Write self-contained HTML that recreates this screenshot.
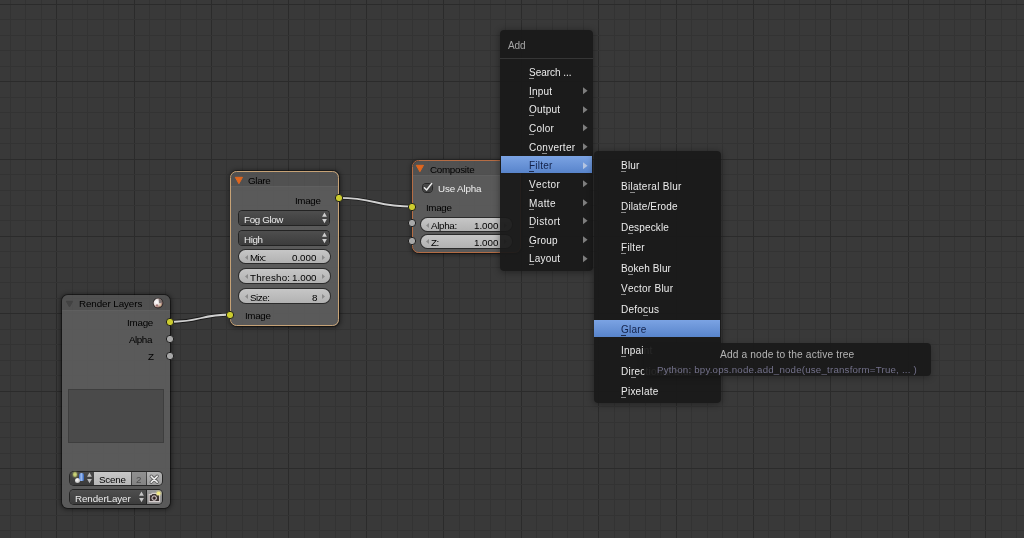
<!DOCTYPE html><html><head><meta charset="utf-8"><style>html,body{margin:0;padding:0;width:1024px;height:538px;overflow:hidden;background:#393939;font-family:"Liberation Sans",sans-serif;}.abs{position:absolute;}.t{position:absolute;white-space:pre;line-height:1;will-change:transform;}.sock{border-radius:50%;box-shadow:0 0 0 0.9px #1a1a1a;}.u{position:relative;}.u::after{content:"";position:absolute;left:0px;width:5px;top:10.7px;height:1px;background:var(--uc);}</style></head><body><div id="root" style="position:absolute;left:0;top:0;width:1024px;height:538px;overflow:hidden;filter:blur(0.28px)"><svg class="abs" width="1024" height="538" style="left:0;top:0;filter:blur(0.45px)" shape-rendering="crispEdges"><rect x="10" y="0" width="1" height="538" fill="#333333"/><rect x="25" y="0" width="1" height="538" fill="#333333"/><rect x="41" y="0" width="1" height="538" fill="#333333"/><rect x="56" y="0" width="1" height="538" fill="#2b2b2b"/><rect x="72" y="0" width="1" height="538" fill="#333333"/><rect x="87" y="0" width="1" height="538" fill="#333333"/><rect x="103" y="0" width="1" height="538" fill="#333333"/><rect x="118" y="0" width="1" height="538" fill="#333333"/><rect x="134" y="0" width="1" height="538" fill="#2b2b2b"/><rect x="149" y="0" width="1" height="538" fill="#333333"/><rect x="165" y="0" width="1" height="538" fill="#333333"/><rect x="180" y="0" width="1" height="538" fill="#333333"/><rect x="196" y="0" width="1" height="538" fill="#333333"/><rect x="211" y="0" width="1" height="538" fill="#2b2b2b"/><rect x="226" y="0" width="1" height="538" fill="#333333"/><rect x="242" y="0" width="1" height="538" fill="#333333"/><rect x="257" y="0" width="1" height="538" fill="#333333"/><rect x="273" y="0" width="1" height="538" fill="#333333"/><rect x="288" y="0" width="1" height="538" fill="#2b2b2b"/><rect x="304" y="0" width="1" height="538" fill="#333333"/><rect x="319" y="0" width="1" height="538" fill="#333333"/><rect x="335" y="0" width="1" height="538" fill="#333333"/><rect x="350" y="0" width="1" height="538" fill="#333333"/><rect x="366" y="0" width="1" height="538" fill="#2b2b2b"/><rect x="381" y="0" width="1" height="538" fill="#333333"/><rect x="397" y="0" width="1" height="538" fill="#333333"/><rect x="412" y="0" width="1" height="538" fill="#333333"/><rect x="428" y="0" width="1" height="538" fill="#333333"/><rect x="443" y="0" width="1" height="538" fill="#2b2b2b"/><rect x="459" y="0" width="1" height="538" fill="#333333"/><rect x="474" y="0" width="1" height="538" fill="#333333"/><rect x="490" y="0" width="1" height="538" fill="#333333"/><rect x="505" y="0" width="1" height="538" fill="#333333"/><rect x="521" y="0" width="1" height="538" fill="#2b2b2b"/><rect x="536" y="0" width="1" height="538" fill="#333333"/><rect x="552" y="0" width="1" height="538" fill="#333333"/><rect x="567" y="0" width="1" height="538" fill="#333333"/><rect x="583" y="0" width="1" height="538" fill="#333333"/><rect x="598" y="0" width="1" height="538" fill="#2b2b2b"/><rect x="614" y="0" width="1" height="538" fill="#333333"/><rect x="629" y="0" width="1" height="538" fill="#333333"/><rect x="645" y="0" width="1" height="538" fill="#333333"/><rect x="660" y="0" width="1" height="538" fill="#333333"/><rect x="676" y="0" width="1" height="538" fill="#2b2b2b"/><rect x="691" y="0" width="1" height="538" fill="#333333"/><rect x="707" y="0" width="1" height="538" fill="#333333"/><rect x="722" y="0" width="1" height="538" fill="#333333"/><rect x="737" y="0" width="1" height="538" fill="#333333"/><rect x="753" y="0" width="1" height="538" fill="#2b2b2b"/><rect x="768" y="0" width="1" height="538" fill="#333333"/><rect x="784" y="0" width="1" height="538" fill="#333333"/><rect x="799" y="0" width="1" height="538" fill="#333333"/><rect x="815" y="0" width="1" height="538" fill="#333333"/><rect x="830" y="0" width="1" height="538" fill="#2b2b2b"/><rect x="846" y="0" width="1" height="538" fill="#333333"/><rect x="861" y="0" width="1" height="538" fill="#333333"/><rect x="877" y="0" width="1" height="538" fill="#333333"/><rect x="892" y="0" width="1" height="538" fill="#333333"/><rect x="908" y="0" width="1" height="538" fill="#2b2b2b"/><rect x="923" y="0" width="1" height="538" fill="#333333"/><rect x="939" y="0" width="1" height="538" fill="#333333"/><rect x="954" y="0" width="1" height="538" fill="#333333"/><rect x="970" y="0" width="1" height="538" fill="#333333"/><rect x="985" y="0" width="1" height="538" fill="#2b2b2b"/><rect x="1001" y="0" width="1" height="538" fill="#333333"/><rect x="1016" y="0" width="1" height="538" fill="#333333"/><rect x="0" y="4" width="1024" height="1" fill="#2b2b2b"/><rect x="0" y="19" width="1024" height="1" fill="#333333"/><rect x="0" y="35" width="1024" height="1" fill="#333333"/><rect x="0" y="50" width="1024" height="1" fill="#333333"/><rect x="0" y="66" width="1024" height="1" fill="#333333"/><rect x="0" y="81" width="1024" height="1" fill="#2b2b2b"/><rect x="0" y="97" width="1024" height="1" fill="#333333"/><rect x="0" y="112" width="1024" height="1" fill="#333333"/><rect x="0" y="128" width="1024" height="1" fill="#333333"/><rect x="0" y="143" width="1024" height="1" fill="#333333"/><rect x="0" y="159" width="1024" height="1" fill="#2b2b2b"/><rect x="0" y="174" width="1024" height="1" fill="#333333"/><rect x="0" y="190" width="1024" height="1" fill="#333333"/><rect x="0" y="205" width="1024" height="1" fill="#333333"/><rect x="0" y="220" width="1024" height="1" fill="#333333"/><rect x="0" y="236" width="1024" height="1" fill="#2b2b2b"/><rect x="0" y="251" width="1024" height="1" fill="#333333"/><rect x="0" y="267" width="1024" height="1" fill="#333333"/><rect x="0" y="282" width="1024" height="1" fill="#333333"/><rect x="0" y="298" width="1024" height="1" fill="#333333"/><rect x="0" y="313" width="1024" height="1" fill="#2b2b2b"/><rect x="0" y="329" width="1024" height="1" fill="#333333"/><rect x="0" y="344" width="1024" height="1" fill="#333333"/><rect x="0" y="360" width="1024" height="1" fill="#333333"/><rect x="0" y="375" width="1024" height="1" fill="#333333"/><rect x="0" y="391" width="1024" height="1" fill="#2b2b2b"/><rect x="0" y="406" width="1024" height="1" fill="#333333"/><rect x="0" y="422" width="1024" height="1" fill="#333333"/><rect x="0" y="437" width="1024" height="1" fill="#333333"/><rect x="0" y="453" width="1024" height="1" fill="#333333"/><rect x="0" y="468" width="1024" height="1" fill="#2b2b2b"/><rect x="0" y="484" width="1024" height="1" fill="#333333"/><rect x="0" y="499" width="1024" height="1" fill="#333333"/><rect x="0" y="515" width="1024" height="1" fill="#333333"/><rect x="0" y="530" width="1024" height="1" fill="#333333"/></svg><div class="abs" style="left:62.00px;top:295.00px;width:108.00px;height:213.40px;border-radius:6px;box-shadow:0 0 0 1px rgba(0,0,0,0.42),0 0.5px 4px 1.5px rgba(0,0,0,0.42);background:rgba(93,93,93,0.93);"></div><div class="abs" style="left:62.00px;top:295.00px;width:108.00px;height:15.00px;border-radius:6px 6px 0 0;background:rgba(0,0,0,0.10);box-shadow:0 1px 0 rgba(255,255,255,0.03);"></div><svg class="abs" style="left:64.8px;top:299.6px" width="9.0" height="8.2"><polygon points="1.3,1.3 7.7,1.3 4.5,6.9" fill="#424242" stroke="#424242" stroke-width="1" stroke-linejoin="round"/></svg><div class="t" style="left:78.60px;top:298.90px;font-size:9.8px;color:#000;letter-spacing:-0.082px;">Render Layers</div><svg class="abs" style="left:152px;top:297.3px" width="12" height="12"><defs><radialGradient id="sph" cx="0.35" cy="0.38" r="0.7"><stop offset="0" stop-color="#ffffff"/><stop offset="0.45" stop-color="#e8e0e0"/><stop offset="0.8" stop-color="#b08a80"/><stop offset="1" stop-color="#6a4a44"/></radialGradient></defs><circle cx="6.1" cy="6.1" r="5.3" fill="#2e2a2a"/><circle cx="6.1" cy="6.1" r="4.5" fill="url(#sph)"/><path d="M6.6,1.8 A4.4,4.4 0 0 1 10.4,5.6 L7,6.2 Z" fill="#6a6262" opacity="0.8"/><circle cx="5" cy="8.3" r="1.1" fill="#8a5050" opacity="0.7"/><circle cx="8.2" cy="8" r="1.3" fill="#e8d8a8" opacity="0.6"/></svg><div class="t" style="right:871.00px;top:318.40px;font-size:9.8px;color:#000;letter-spacing:-0.227px;">Image</div><div class="t" style="right:871.70px;top:335.10px;font-size:9.8px;color:#000;letter-spacing:-0.433px;">Alpha</div><div class="t" style="right:870.50px;top:352.30px;font-size:9.8px;color:#000;letter-spacing:0.000px;">Z</div><div class="abs" style="left:69.00px;top:389.50px;width:94.00px;height:52.00px;background:#4a4a4a;box-shadow:0 0 0 1px #3e3e3e;"></div><div class="abs" style="left:70.00px;top:471.70px;width:92.00px;height:13.30px;border-radius:4px;box-shadow:0 0 0 1px #262626;background:linear-gradient(#4a4a4a,#3a3a3a);"></div><div class="abs" style="left:93.70px;top:471.70px;width:37.60px;height:13.30px;background:linear-gradient(#c8c8c8,#b6b6b6);"></div><div class="abs" style="left:131.90px;top:471.70px;width:14.40px;height:13.30px;background:linear-gradient(#909090,#848484);"></div><div class="abs" style="left:146.70px;top:471.70px;width:15.30px;height:13.30px;border-radius:0 4px 4px 0;background:linear-gradient(#b4b4b4,#9c9c9c);"></div><div class="t" style="left:99.30px;top:475.20px;font-size:9.8px;color:#000;letter-spacing:-0.216px;">Scene</div><div class="t" style="left:135.60px;top:475.20px;font-size:9.8px;color:#4e4e4e;letter-spacing:0.000px;">2</div><svg class="abs" style="left:147.8px;top:472.6px" width="12" height="12"><path d="M3.2,3.2 L9.2,9.2 M9.2,3.2 L3.2,9.2" stroke="#5a5a5a" stroke-width="3.2" stroke-linecap="round"/><path d="M3.2,3.2 L9.2,9.2 M9.2,3.2 L3.2,9.2" stroke="#f0f0f0" stroke-width="1.6" stroke-linecap="round"/></svg><div class="abs" style="left:72.8px;top:472.4px;width:4.4px;height:4.4px;border-radius:50%;background:radial-gradient(#d8e080,#98a058);box-shadow:0 0 1.5px 0.5px rgba(200,210,110,0.5)"></div><div class="abs" style="left:79.4px;top:473.2px;width:4.6px;height:7.4px;border-radius:2.2px 2.2px 1.5px 1.5px;background:linear-gradient(90deg,#3a6ac8,#a0c0f4 45%,#3060b8)"></div><div class="abs" style="left:74.6px;top:477.8px;width:5.6px;height:5.6px;border-radius:50%;background:radial-gradient(circle at 40% 35%,#fff,#c0c0c0 70%,#888)"></div><svg class="abs" style="left:87.40px;top:472.30px" width="5" height="12"><polygon points="2.5,0.6 4.9,4.7 0.1,4.7" fill="#bdbdbd"/><polygon points="0.1,7.1 4.9,7.1 2.5,11.2" fill="#bdbdbd"/></svg><div class="abs" style="left:70.00px;top:489.90px;width:76.30px;height:14.10px;border-radius:4px 0 0 4px;background:linear-gradient(#4e4e4e,#3c3c3c);box-shadow:0 0 0 1px #232323;"></div><div class="t" style="left:75.20px;top:493.50px;font-size:9.8px;color:#ececec;letter-spacing:-0.095px;">RenderLayer</div><svg class="abs" style="left:139.20px;top:490.90px" width="5" height="12"><polygon points="2.5,0.6 4.9,4.7 0.1,4.7" fill="#c4c4c4"/><polygon points="0.1,7.1 4.9,7.1 2.5,11.2" fill="#c4c4c4"/></svg><div class="abs" style="left:146.70px;top:489.90px;width:15.30px;height:14.10px;border-radius:0 4px 4px 0;background:linear-gradient(#9a9a9a,#888888);box-shadow:0 0 0 1px #232323;"></div><svg class="abs" style="left:147px;top:490px" width="15" height="14"><path d="M2.2,4.6 L4.2,4.6 L5.2,3.4 L9.2,3.4 L10.2,4.6 L12.6,4.6 L12.6,11.6 L2.2,11.6 Z" fill="#3a3030" stroke="#d4cccc" stroke-width="1.1"/><circle cx="7.2" cy="8.1" r="2.3" fill="#5a4848" stroke="#e4dcdc" stroke-width="0.9"/><circle cx="7.2" cy="8.1" r="0.9" fill="#201818"/><circle cx="11.6" cy="3.2" r="1.8" fill="#f8f080" opacity="0.9"/><circle cx="11.6" cy="3.2" r="3" fill="#f8f080" opacity="0.3"/></svg><div class="abs" style="left:230.90px;top:171.30px;width:107.80px;height:154.50px;border-radius:6px;box-shadow:0 0 0 1px rgba(0,0,0,0.42),0 0.5px 4px 1.5px rgba(0,0,0,0.42);background:rgba(93,93,93,0.93);"></div><div class="abs" style="left:230.90px;top:171.30px;width:107.80px;height:15.20px;border-radius:6px 6px 0 0;background:rgba(0,0,0,0.10);box-shadow:0 1px 0 rgba(255,255,255,0.03);"></div><div class="abs" style="left:230.40px;top:170.80px;width:108.80px;height:155.50px;border-radius:6.5px;border:1.2px solid #c6a276;box-sizing:border-box;"></div><svg class="abs" style="left:234.0px;top:175.6px" width="9.8" height="9.0"><polygon points="1.3,1.3 8.5,1.3 4.9,7.7" fill="#e0661e" stroke="#e0661e" stroke-width="1" stroke-linejoin="round"/></svg><div class="t" style="left:248.20px;top:175.70px;font-size:9.8px;color:#000;letter-spacing:-0.294px;">Glare</div><div class="t" style="right:703.40px;top:195.90px;font-size:9.8px;color:#000;letter-spacing:-0.347px;">Image</div><div class="abs" style="left:239.30px;top:211.20px;width:90.20px;height:13.70px;border-radius:3.5px;background:linear-gradient(#4e4e4e,#3c3c3c);box-shadow:0 0 0 1px #232323;"></div><div class="t" style="left:244.30px;top:214.70px;font-size:9.8px;color:#ececec;letter-spacing:-0.355px;">Fog Glow</div><svg class="abs" style="left:322.00px;top:212.05px" width="5" height="12"><polygon points="2.5,0.6 4.9,4.7 0.1,4.7" fill="#cfcfcf"/><polygon points="0.1,7.1 4.9,7.1 2.5,11.2" fill="#cfcfcf"/></svg><div class="abs" style="left:239.30px;top:231.40px;width:90.20px;height:13.60px;border-radius:3.5px;background:linear-gradient(#4e4e4e,#3c3c3c);box-shadow:0 0 0 1px #232323;"></div><div class="t" style="left:244.30px;top:234.90px;font-size:9.8px;color:#ececec;letter-spacing:-0.389px;">High</div><svg class="abs" style="left:322.00px;top:232.20px" width="5" height="12"><polygon points="2.5,0.6 4.9,4.7 0.1,4.7" fill="#cfcfcf"/><polygon points="0.1,7.1 4.9,7.1 2.5,11.2" fill="#cfcfcf"/></svg><div class="abs" style="left:239.20px;top:250.00px;width:90.50px;height:13.00px;border-radius:7.0px;background:linear-gradient(#c6c6c6,#b2b2b2);box-shadow:0 0 0 1px #2b2b2b;"></div><svg class="abs" style="left:245.00px;top:254.50px" width="3" height="5"><polygon points="3,0 3,5 0,2.5" fill="#8c8c8c"/></svg><svg class="abs" style="left:321.70px;top:254.50px" width="3" height="5"><polygon points="0,0 0,5 3,2.5" fill="#8c8c8c"/></svg><div class="t" style="left:249.90px;top:253.40px;font-size:9.8px;color:#000;letter-spacing:-0.542px;">Mix:</div><div class="t" style="right:707.30px;top:253.40px;font-size:9.8px;color:#000;letter-spacing:-0.026px;">0.000</div><div class="abs" style="left:239.20px;top:269.00px;width:90.50px;height:13.50px;border-radius:7.2px;background:linear-gradient(#c6c6c6,#b2b2b2);box-shadow:0 0 0 1px #2b2b2b;"></div><svg class="abs" style="left:245.00px;top:273.75px" width="3" height="5"><polygon points="3,0 3,5 0,2.5" fill="#8c8c8c"/></svg><svg class="abs" style="left:321.70px;top:273.75px" width="3" height="5"><polygon points="0,0 0,5 3,2.5" fill="#8c8c8c"/></svg><div class="t" style="left:249.90px;top:272.65px;font-size:9.8px;color:#000;letter-spacing:0.191px;">Thresho:</div><div class="t" style="right:707.30px;top:272.65px;font-size:9.8px;color:#000;letter-spacing:0.014px;">1.000</div><div class="abs" style="left:239.20px;top:289.00px;width:90.50px;height:13.50px;border-radius:7.2px;background:linear-gradient(#c6c6c6,#b2b2b2);box-shadow:0 0 0 1px #2b2b2b;"></div><svg class="abs" style="left:245.00px;top:293.75px" width="3" height="5"><polygon points="3,0 3,5 0,2.5" fill="#8c8c8c"/></svg><svg class="abs" style="left:321.70px;top:293.75px" width="3" height="5"><polygon points="0,0 0,5 3,2.5" fill="#8c8c8c"/></svg><div class="t" style="left:249.90px;top:292.65px;font-size:9.8px;color:#000;letter-spacing:-0.456px;">Size:</div><div class="t" style="right:707.30px;top:292.65px;font-size:9.8px;color:#000;letter-spacing:-0.453px;">8</div><div class="t" style="left:244.50px;top:311.20px;font-size:9.8px;color:#000;letter-spacing:-0.347px;">Image</div><div class="abs" style="left:412.60px;top:160.60px;width:108.00px;height:92.00px;border-radius:6px;box-shadow:0 0 0 1px rgba(0,0,0,0.42),0 0.5px 4px 1.5px rgba(0,0,0,0.42);background:rgba(93,93,93,0.93);"></div><div class="abs" style="left:412.60px;top:160.60px;width:108.00px;height:14.90px;border-radius:6px 6px 0 0;background:rgba(0,0,0,0.10);box-shadow:0 1px 0 rgba(255,255,255,0.03);"></div><div class="abs" style="left:412.10px;top:160.10px;width:109.00px;height:93.00px;border-radius:6.5px;border:1.2px solid #b46c44;box-sizing:border-box;"></div><svg class="abs" style="left:415.0px;top:164.4px" width="9.8" height="9.0"><polygon points="1.3,1.3 8.5,1.3 4.9,7.7" fill="#e0661e" stroke="#e0661e" stroke-width="1" stroke-linejoin="round"/></svg><div class="t" style="left:429.70px;top:164.70px;font-size:9.8px;color:#000;letter-spacing:-0.270px;">Composite</div><div class="abs" style="left:422.60px;top:183.60px;width:9.00px;height:8.00px;border-radius:3.2px;background:linear-gradient(#4a4a4a,#3c3c3c);box-shadow:0 0 0 1px #262626;"></div><svg class="abs" style="left:422px;top:181.5px" width="12" height="11"><path d="M2.4,5.8 L4.6,8 L9.6,1.6" stroke="#f0f0f0" stroke-width="1.5" fill="none" stroke-linecap="round" stroke-linejoin="round"/></svg><div class="t" style="left:438.40px;top:184.20px;font-size:9.8px;color:#f0f0f0;letter-spacing:-0.152px;">Use Alpha</div><div class="t" style="left:425.60px;top:203.20px;font-size:9.8px;color:#000;letter-spacing:-0.347px;">Image</div><div class="abs" style="left:420.50px;top:218.00px;width:91.00px;height:13.00px;border-radius:7.0px;background:linear-gradient(#c6c6c6,#b2b2b2);box-shadow:0 0 0 1px #2b2b2b;"></div><svg class="abs" style="left:426.30px;top:222.50px" width="3" height="5"><polygon points="3,0 3,5 0,2.5" fill="#8c8c8c"/></svg><svg class="abs" style="left:503.50px;top:222.50px" width="3" height="5"><polygon points="0,0 0,5 3,2.5" fill="#8c8c8c"/></svg><div class="t" style="left:431.20px;top:221.40px;font-size:9.8px;color:#000;letter-spacing:-0.330px;">Alpha:</div><div class="t" style="right:525.50px;top:221.40px;font-size:9.8px;color:#000;letter-spacing:-0.026px;">1.000</div><div class="abs" style="left:420.50px;top:234.70px;width:91.00px;height:12.90px;border-radius:7.0px;background:linear-gradient(#c6c6c6,#b2b2b2);box-shadow:0 0 0 1px #2b2b2b;"></div><svg class="abs" style="left:426.30px;top:239.15px" width="3" height="5"><polygon points="3,0 3,5 0,2.5" fill="#8c8c8c"/></svg><svg class="abs" style="left:503.50px;top:239.15px" width="3" height="5"><polygon points="0,0 0,5 3,2.5" fill="#8c8c8c"/></svg><div class="t" style="left:431.20px;top:238.05px;font-size:9.8px;color:#000;letter-spacing:-0.509px;">Z:</div><div class="t" style="right:525.50px;top:238.05px;font-size:9.8px;color:#000;letter-spacing:-0.026px;">1.000</div><svg class="abs" style="left:0;top:0" width="1024" height="538"><path d="M170,322 C200.25,322 200.25,314.5 230.5,314.5" stroke="rgba(20,20,20,0.85)" stroke-width="3.4" fill="none"/><path d="M170,322 C200.25,322 200.25,314.5 230.5,314.5" stroke="#d0d0d0" stroke-width="1.8" fill="none"/><path d="M338.7,197.9 C375.54999999999995,197.9 375.54999999999995,206.6 412.4,206.6" stroke="rgba(20,20,20,0.85)" stroke-width="3.4" fill="none"/><path d="M338.7,197.9 C375.54999999999995,197.9 375.54999999999995,206.6 412.4,206.6" stroke="#d0d0d0" stroke-width="1.8" fill="none"/></svg><svg class="abs" style="left:164.00px;top:316.00px" width="12" height="12"><circle cx="6" cy="6" r="3.65" fill="#cccc2e" stroke="#1a1a1a" stroke-width="0.95"/></svg><svg class="abs" style="left:164.00px;top:333.00px" width="12" height="12"><circle cx="6" cy="6" r="3.65" fill="#a8a8a8" stroke="#1a1a1a" stroke-width="0.95"/></svg><svg class="abs" style="left:164.00px;top:349.80px" width="12" height="12"><circle cx="6" cy="6" r="3.65" fill="#a8a8a8" stroke="#1a1a1a" stroke-width="0.95"/></svg><svg class="abs" style="left:224.40px;top:308.50px" width="12" height="12"><circle cx="6" cy="6" r="3.65" fill="#cccc2e" stroke="#1a1a1a" stroke-width="0.95"/></svg><svg class="abs" style="left:332.70px;top:191.90px" width="12" height="12"><circle cx="6" cy="6" r="3.65" fill="#cccc2e" stroke="#1a1a1a" stroke-width="0.95"/></svg><svg class="abs" style="left:406.40px;top:200.60px" width="12" height="12"><circle cx="6" cy="6" r="3.65" fill="#cccc2e" stroke="#1a1a1a" stroke-width="0.95"/></svg><svg class="abs" style="left:406.30px;top:217.40px" width="12" height="12"><circle cx="6" cy="6" r="3.65" fill="#a8a8a8" stroke="#1a1a1a" stroke-width="0.95"/></svg><svg class="abs" style="left:406.30px;top:234.60px" width="12" height="12"><circle cx="6" cy="6" r="3.65" fill="#a8a8a8" stroke="#1a1a1a" stroke-width="0.95"/></svg><div class="abs" style="left:500.00px;top:30.00px;width:93.40px;height:241.00px;border-radius:4px;background:rgba(26,26,26,0.94);box-shadow:0 1px 6px 1px rgba(0,0,0,0.32);"></div><div class="t" style="left:508.40px;top:41.03px;font-size:10px;color:#a6a6a6;letter-spacing:-0.066px;">Add</div><div class="abs" style="left:500.00px;top:57.70px;width:93.40px;height:1.00px;background:#363636;"></div><div class="t" style="left:529.20px;top:68.23px;font-size:10px;color:#ececec;letter-spacing:-0.041px;"><span class="u" style="--uc:#8c8c8c">S</span>earch ...</div><div class="t" style="left:529.20px;top:86.84px;font-size:10px;color:#ececec;letter-spacing:0.220px;"><span class="u" style="--uc:#8c8c8c">I</span>nput</div><svg class="abs" style="left:583px;top:87.11px" width="5" height="8"><polygon points="0,0.3 4.6,3.8 0,7.3" fill="#7e7e7e"/></svg><div class="t" style="left:529.20px;top:105.45px;font-size:10px;color:#ececec;letter-spacing:0.220px;"><span class="u" style="--uc:#8c8c8c">O</span>utput</div><svg class="abs" style="left:583px;top:105.72px" width="5" height="8"><polygon points="0,0.3 4.6,3.8 0,7.3" fill="#7e7e7e"/></svg><div class="t" style="left:529.20px;top:124.06px;font-size:10px;color:#ececec;letter-spacing:0.220px;"><span class="u" style="--uc:#8c8c8c">C</span>olor</div><svg class="abs" style="left:583px;top:124.33px" width="5" height="8"><polygon points="0,0.3 4.6,3.8 0,7.3" fill="#7e7e7e"/></svg><div class="t" style="left:529.20px;top:142.68px;font-size:10px;color:#ececec;letter-spacing:0.266px;">Co<span class="u" style="--uc:#8c8c8c">n</span>verter</div><svg class="abs" style="left:583px;top:142.94px" width="5" height="8"><polygon points="0,0.3 4.6,3.8 0,7.3" fill="#7e7e7e"/></svg><div class="abs" style="left:501.40px;top:155.95px;width:91.00px;height:17.10px;background:linear-gradient(#7ba3e3,#5884cb);"></div><div class="t" style="left:529.20px;top:161.28px;font-size:10px;color:#13224a;letter-spacing:0.220px;"><span class="u" style="--uc:#1c2c50">F</span>ilter</div><svg class="abs" style="left:583px;top:161.55px" width="5" height="8"><polygon points="0,0.3 4.6,3.8 0,7.3" fill="#b4c4e0"/></svg><div class="t" style="left:529.20px;top:179.89px;font-size:10px;color:#ececec;letter-spacing:0.390px;"><span class="u" style="--uc:#8c8c8c">V</span>ector</div><svg class="abs" style="left:583px;top:180.16px" width="5" height="8"><polygon points="0,0.3 4.6,3.8 0,7.3" fill="#7e7e7e"/></svg><div class="t" style="left:529.20px;top:198.50px;font-size:10px;color:#ececec;letter-spacing:0.397px;"><span class="u" style="--uc:#8c8c8c">M</span>atte</div><svg class="abs" style="left:583px;top:198.77px" width="5" height="8"><polygon points="0,0.3 4.6,3.8 0,7.3" fill="#7e7e7e"/></svg><div class="t" style="left:529.20px;top:217.12px;font-size:10px;color:#ececec;letter-spacing:0.371px;"><span class="u" style="--uc:#8c8c8c">D</span>istort</div><svg class="abs" style="left:583px;top:217.38px" width="5" height="8"><polygon points="0,0.3 4.6,3.8 0,7.3" fill="#7e7e7e"/></svg><div class="t" style="left:529.20px;top:235.73px;font-size:10px;color:#ececec;letter-spacing:0.220px;"><span class="u" style="--uc:#8c8c8c">G</span>roup</div><svg class="abs" style="left:583px;top:235.99px" width="5" height="8"><polygon points="0,0.3 4.6,3.8 0,7.3" fill="#7e7e7e"/></svg><div class="t" style="left:529.20px;top:254.33px;font-size:10px;color:#ececec;letter-spacing:0.220px;"><span class="u" style="--uc:#8c8c8c">L</span>ayout</div><svg class="abs" style="left:583px;top:254.60px" width="5" height="8"><polygon points="0,0.3 4.6,3.8 0,7.3" fill="#7e7e7e"/></svg><div class="abs" style="left:593.60px;top:151.20px;width:127.00px;height:251.40px;border-radius:4px;background:rgba(26,26,26,0.94);box-shadow:0 1px 6px 1px rgba(0,0,0,0.32);"></div><div class="t" style="left:621.10px;top:161.24px;font-size:10px;color:#ececec;letter-spacing:0.220px;"><span class="u" style="--uc:#8c8c8c">B</span>lur</div><div class="t" style="left:621.10px;top:181.77px;font-size:10px;color:#ececec;letter-spacing:0.278px;">Bi<span class="u" style="--uc:#8c8c8c">l</span>ateral Blur</div><div class="t" style="left:621.10px;top:202.30px;font-size:10px;color:#ececec;letter-spacing:0.139px;"><span class="u" style="--uc:#8c8c8c">D</span>ilate/Erode</div><div class="t" style="left:621.10px;top:222.83px;font-size:10px;color:#ececec;letter-spacing:0.144px;">D<span class="u" style="--uc:#8c8c8c">e</span>speckle</div><div class="t" style="left:621.10px;top:243.36px;font-size:10px;color:#ececec;letter-spacing:0.261px;"><span class="u" style="--uc:#8c8c8c">F</span>ilter</div><div class="t" style="left:621.10px;top:263.89px;font-size:10px;color:#ececec;letter-spacing:0.108px;">B<span class="u" style="--uc:#8c8c8c">o</span>keh Blur</div><div class="t" style="left:621.10px;top:284.42px;font-size:10px;color:#ececec;letter-spacing:0.253px;"><span class="u" style="--uc:#8c8c8c">V</span>ector Blur</div><div class="t" style="left:621.10px;top:304.94px;font-size:10px;color:#ececec;letter-spacing:0.220px;">Defo<span class="u" style="--uc:#8c8c8c">c</span>us</div><div class="abs" style="left:593.60px;top:320.14px;width:126.60px;height:16.80px;background:linear-gradient(#7ba3e3,#5884cb);"></div><div class="t" style="left:621.10px;top:325.48px;font-size:10px;color:#13224a;letter-spacing:0.189px;"><span class="u" style="--uc:#1c2c50">G</span>lare</div><div class="t" style="left:621.10px;top:346.01px;font-size:10px;color:#ececec;letter-spacing:0.220px;"><span class="u" style="--uc:#8c8c8c">I</span>npaint</div><div class="t" style="left:621.10px;top:366.54px;font-size:10px;color:#ececec;letter-spacing:0.220px;">Di<span class="u" style="--uc:#8c8c8c">r</span>ectional Blur</div><div class="t" style="left:621.10px;top:387.06px;font-size:10px;color:#ececec;letter-spacing:0.240px;"><span class="u" style="--uc:#8c8c8c">P</span>ixelate</div><div class="abs" style="left:643.60px;top:342.60px;width:287.80px;height:33.80px;border-radius:4px;background:rgba(25,25,25,0.94);box-shadow:0 2px 6px rgba(0,0,0,0.25);"></div><div class="t" style="left:720.10px;top:349.77px;font-size:10.2px;color:#b4b4b4;letter-spacing:0.143px;">Add a node to the active tree</div><div class="t" style="left:657.00px;top:364.79px;font-size:9.7px;color:#73718a;letter-spacing:0.207px;">Python: bpy.ops.node.add_node(use_transform=True, ... )</div></div></body></html>
